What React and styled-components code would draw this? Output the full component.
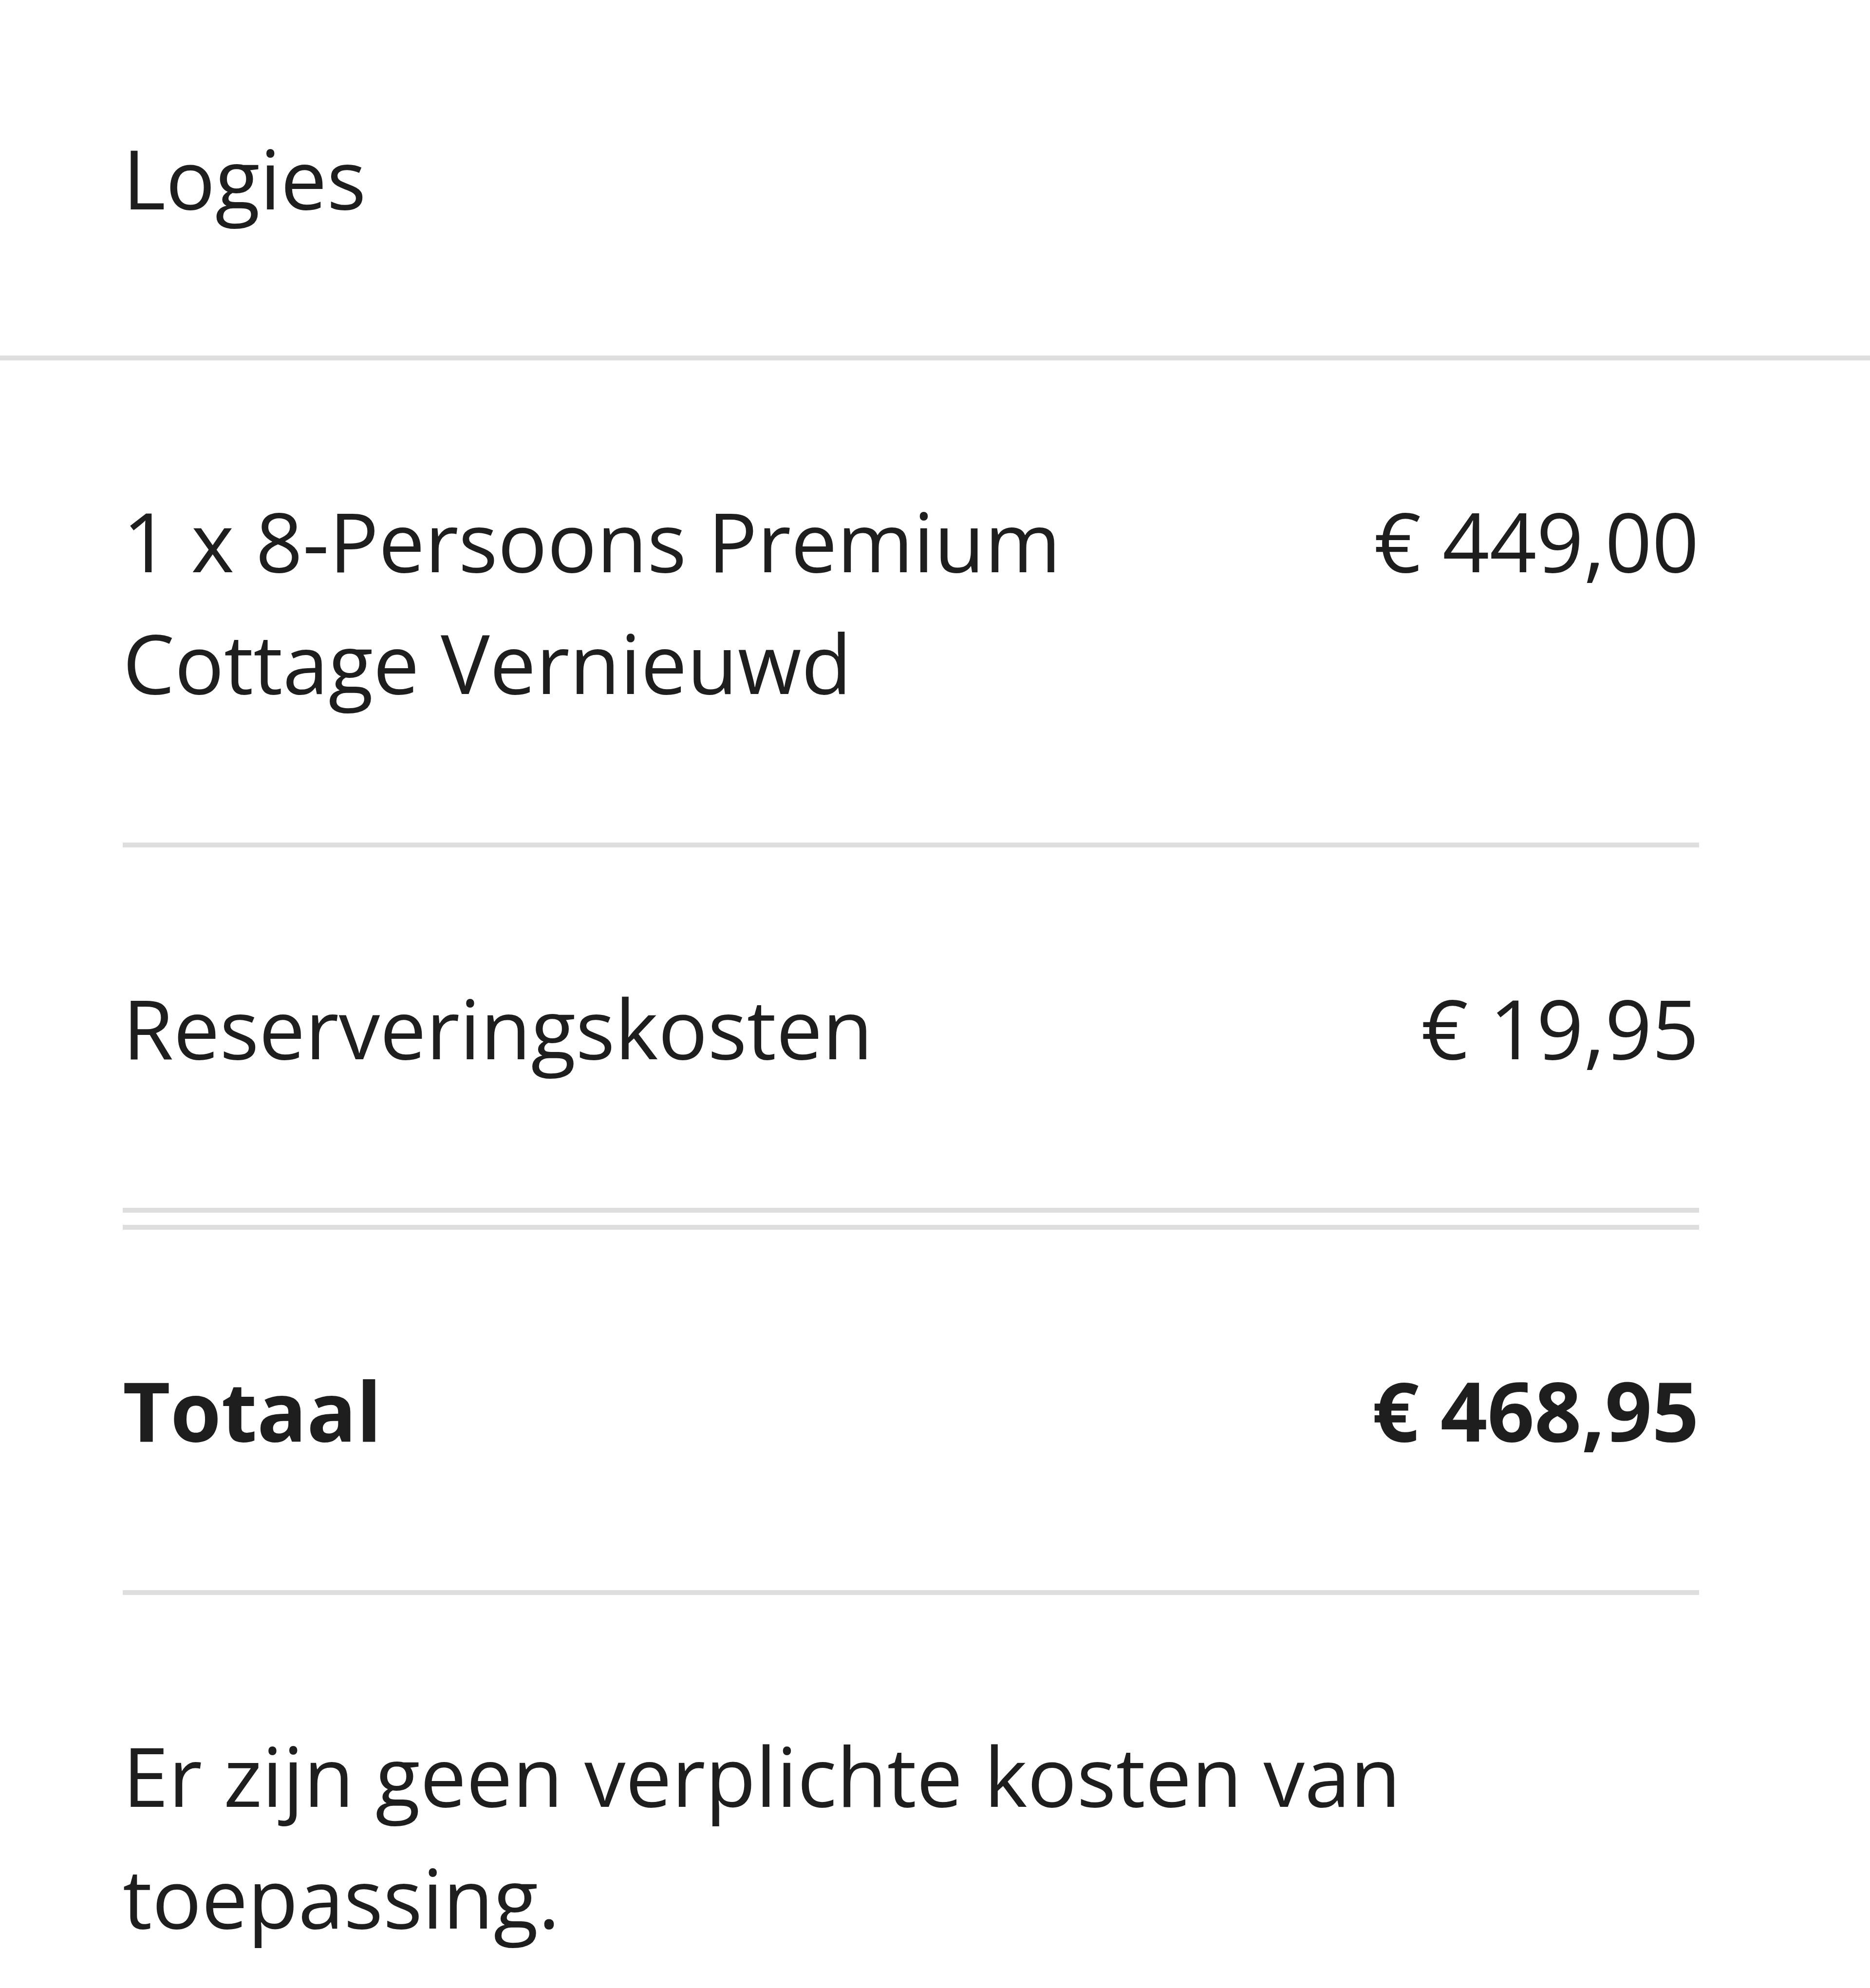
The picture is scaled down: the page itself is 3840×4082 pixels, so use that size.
import styled, { createGlobalStyle } from "styled-components";

const GlobalStyle = createGlobalStyle`
    html, body {
        margin: 0;
        padding: 0;
        background: #ffffff;
    }
    * {
        box-sizing: border-box;
    }
`

const Page = styled.div`
    width: 3840px;
    min-height: 4082px;
    background: #ffffff;
    font-family: "Open Sans", "Liberation Sans", sans-serif;
    font-size: 169px;
    line-height: 250px;
    color: #1e1e1e;
`

const Header = styled.div`
    padding: 240px 351px 240px 252px;
    border-bottom: 10px solid #dedede;
`

const Body = styled.div`
    padding: 0 351px 0 252px;
`

const Row = styled.div`
    display: flex;
    justify-content: space-between;
    align-items: flex-start;
    padding: 245px 0;
    font-weight: ${(p) => (p.$bold ? 700 : 400)};
`

const Label = styled.div`
    width: 66.6%;
`

const Price = styled.div`
    text-align: right;
    white-space: nowrap;
`

const Divider = styled.div`
    height: ${(p) => (p.$double ? "45px" : "10px")};
    border-top: 10px solid #dedede;
    border-bottom: ${(p) => (p.$double ? "10px solid #dedede" : "none")};
`

const Note = styled.p`
    margin: 0;
    padding: 245px 0 0;
`

const App = () => {
    return (
        <Page>
            <GlobalStyle />
            <Header>Logies</Header>
            <Body>
                <Row>
                    <Label>1 x 8-Persoons Premium Cottage Vernieuwd</Label>
                    <Price>€ 449,00</Price>
                </Row>
                <Divider />
                <Row>
                    <Label>Reserveringskosten</Label>
                    <Price>€ 19,95</Price>
                </Row>
                <Divider $double />
                <Row $bold>
                    <Label>Totaal</Label>
                    <Price>€ 468,95</Price>
                </Row>
                <Divider />
                <Note>Er zijn geen verplichte kosten van toepassing.</Note>
            </Body>
        </Page>
    )
}

export default App;
